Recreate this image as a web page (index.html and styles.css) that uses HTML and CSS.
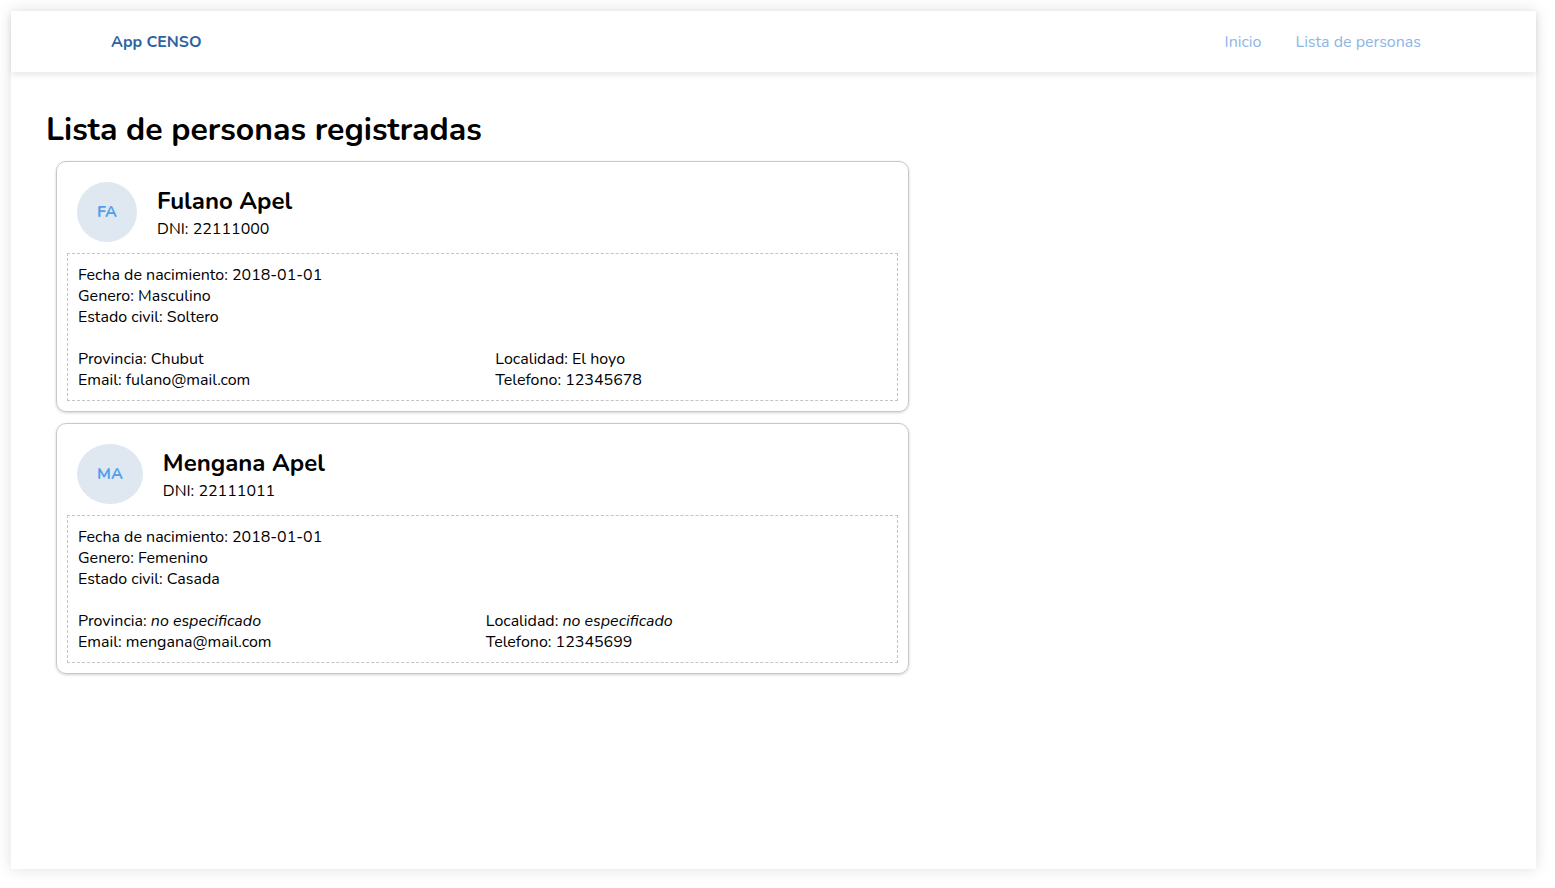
FILE: index.html
```html
<!DOCTYPE html>
<html lang="es">
<head>
<meta charset="utf-8">
<title>App CENSO</title>
<link rel="stylesheet" href="styles.css">
</head>
<body>
<div class="app">
  <nav class="navbar">
    <a class="brand" href="#">App CENSO</a>
    <div class="nav-links">
      <a class="nav-link" href="#">Inicio</a>
      <a class="nav-link" href="#">Lista de personas</a>
    </div>
  </nav>
  <main class="main">
    <h1 class="title">Lista de personas registradas</h1>
    <div class="cards">
      <div class="card">
        <div class="card-header">
          <div class="avatar">FA</div>
          <div class="identity">
            <div class="name">Fulano Apel</div>
            <div class="dni">DNI: 22111000</div>
          </div>
        </div>
        <div class="details">
          <div>Fecha de nacimiento: 2018-01-01</div>
          <div>Genero: Masculino</div>
          <div>Estado civil: Soltero</div>
          <div class="row">
            <div class="col">
              <div>Provincia: Chubut</div>
              <div>Email: fulano@mail.com</div>
            </div>
            <div class="col">
              <div>Localidad: El hoyo</div>
              <div>Telefono: 12345678</div>
            </div>
          </div>
        </div>
      </div>
      <div class="card">
        <div class="card-header">
          <div class="avatar">MA</div>
          <div class="identity">
            <div class="name">Mengana Apel</div>
            <div class="dni">DNI: 22111011</div>
          </div>
        </div>
        <div class="details">
          <div>Fecha de nacimiento: 2018-01-01</div>
          <div>Genero: Femenino</div>
          <div>Estado civil: Casada</div>
          <div class="row">
            <div class="col">
              <div>Provincia: <em>no especificado</em></div>
              <div>Email: mengana@mail.com</div>
            </div>
            <div class="col">
              <div>Localidad: <em>no especificado</em></div>
              <div>Telefono: 12345699</div>
            </div>
          </div>
        </div>
      </div>
    </div>
  </main>
</div>
</body>
</html>
```

FILE: styles.css
```css
html, body {
  margin: 0;
  background: #ffffff;
}
body {
  padding: 11px 19px 19px 11px;
  font-family: "Nunito", "Lato", "Liberation Sans", sans-serif;
  color: #000;
  font-size: 16px;
}
.app {
  height: 858px;
  background: #fff;
  box-shadow: 0 0 14px rgba(0, 0, 0, 0.13);
  display: flex;
  flex-direction: column;
}
.navbar {
  height: 61px;
  display: flex;
  align-items: center;
  justify-content: space-between;
  padding: 0 98px 0 100px;
  box-shadow: 0 3px 6px rgba(0, 0, 0, 0.09);
  position: relative;
}
.brand {
  color: #2e639f;
  font-weight: 700;
  text-decoration: none;
  font-size: 16px;
}
.nav-links {
  display: flex;
}
.nav-link {
  color: #8db5e6;
  text-decoration: none;
  padding: 0 17px;
  font-size: 16px;
}
.main {
  padding: 0 35px;
}
.title {
  font-size: 32px;
  font-weight: 700;
  margin: 38px 0 11px;
  line-height: 40px;
}
.cards {
  width: 853px;
  margin-left: 10px;
  display: flex;
  flex-direction: column;
  gap: 11px;
}
.card {
  border: 1px solid #c8c8c8;
  border-radius: 10px;
  padding: 10px;
  box-shadow: 0 1px 3px rgba(0, 0, 0, 0.18);
}
.card-header {
  display: flex;
  align-items: center;
  gap: 20px;
  padding: 10px 10px 11px;
}
.avatar {
  padding: 20px;
  line-height: 20px;
  border-radius: 50%;
  background: #dfe8f0;
  color: #4f9fed;
  font-weight: 700;
  font-size: 16px;
}
.identity {
  padding-top: 2px;
}
.name {
  font-size: 24px;
  font-weight: 700;
  line-height: 32px;
}
.dni {
  line-height: 24px;
}
.details {
  border: 1px dashed #c4c4c4;
  padding: 11px 10px 9px;
  line-height: 21px;
}
.row {
  display: flex;
  margin-top: 21px;
}
.col {
  flex: 1 1 auto;
}
```
